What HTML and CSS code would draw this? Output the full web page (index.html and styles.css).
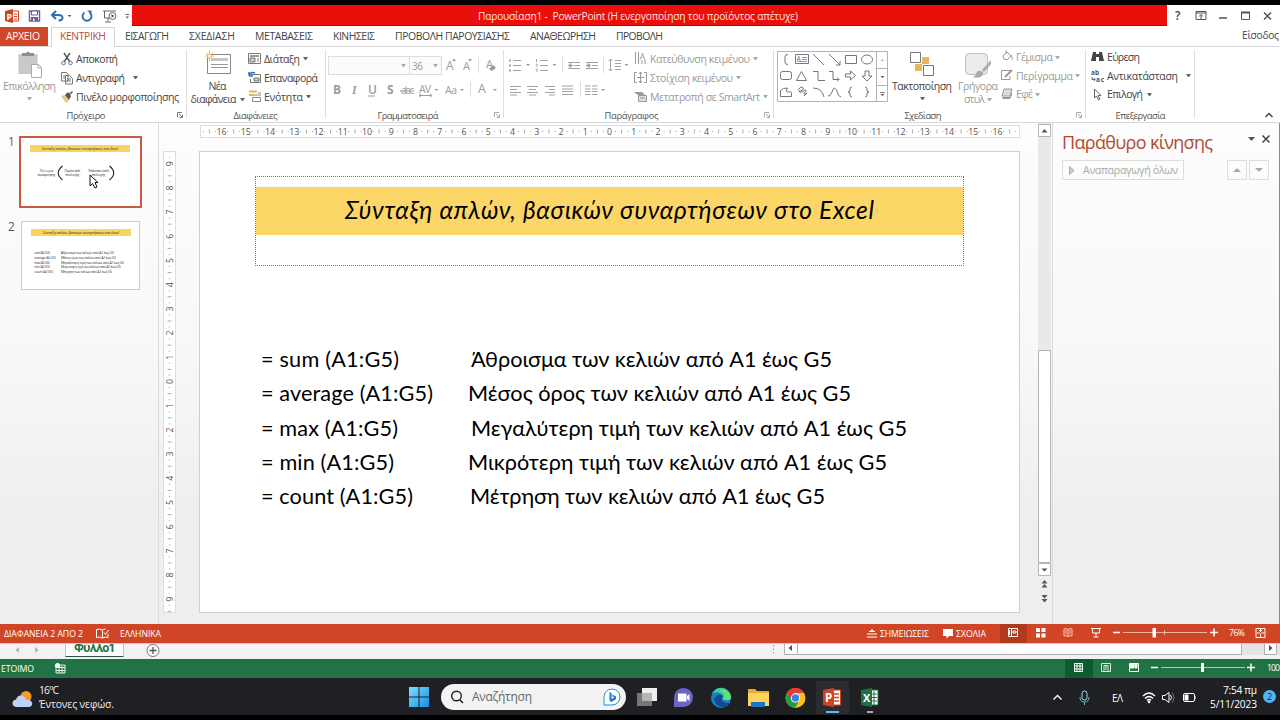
FILE: index.html
```html
<!DOCTYPE html>
<html lang="el">
<head>
<meta charset="utf-8">
<title>Παρουσίαση1 - PowerPoint</title>
<link rel="stylesheet" href="styles.css">
</head>
<body>
<div class="screen">
  <header class="titlebar">
    <svg class="quick" width="132" height="22" viewBox="0 5 132 22">
      <path d="M5 11l8-2v14l-8-2z" fill="#d04423"/><path d="M13 11h5.500v10h-5.500" fill="#fff" stroke="#d04423"/><path d="M14 14h3M14 16.500h3M14 19h3" stroke="#d04423"/><text x="6.500" y="19.500" font-size="9" font-weight="700" fill="#fff">P</text>
      <path d="M29.500 11h10v10h-10z" fill="#fff" stroke="#74559b" stroke-width="1.400"/><path d="M31.500 11h6v4h-6z" fill="#fff" stroke="#74559b"/><path d="M31 17h7v4h-7z" fill="#74559b"/><path d="M33 18.500h1.500V21H33z" fill="#fff"/>
      <path d="M52 15h6.500c3 0 4 1.200 4 2.800s-1.500 2.700-4 2.700M56 11l-4 4 4 4" fill="none" stroke="#2f6fb3" stroke-width="2"/><path d="M67.500 15h4l-2 2z" fill="#555"/>
      <path d="M84.500 12.500a4.500 4.500 0 1 0 5 0" fill="none" stroke="#2f6fb3" stroke-width="1.900"/><path d="M87 10.500h4.500v4z" fill="#2f6fb3"/>
      <path d="M103 11h13M104.500 11v7h6M108 18v3M105 22h6" fill="none" stroke="#666"/><circle cx="112.500" cy="16" r="3.500" fill="#fff" stroke="#666"/><path d="M111.500 14l3 2-3 2z" fill="#666"/>
      <path d="M125.500 14.500h3.500" stroke="#666"/><path d="M125.500 16.500h3.500l-1.750 2z" fill="#666"/>
    </svg>
    <div class="red"><span data-w="320">Παρουσίαση1 -&nbsp; PowerPoint (Η ενεργοποίηση του προϊόντος απέτυχε)</span></div>
    <svg class="winbtns" width="112" height="22" viewBox="1167 5 112 22" fill="none" stroke="#555">
      <text x="1175" y="20" font-size="12" font-weight="600" fill="#444" stroke="none">?</text>
      <path d="M1196 11.500h10v8h-10zM1196 13h10M1201 19v-4M1199 16.500l2-2 2 2"/><path d="M1219 18h8" stroke-width="1.500"/><path d="M1241.500 12.500h8v7h-8z"/><path d="M1241 12.500h9" stroke-width="2"/><path d="M1262.500 12.500l7 7m0-7l-7 7" stroke-width="1.500" transform="translate(1.500 0)"/>
    </svg>
  </header>

  <nav class="tabs">
    <span class="tab file"><b data-w="34">ΑΡΧΕΙΟ</b></span>
    <span class="tab active"><b data-w="46">ΚΕΝΤΡΙΚΗ</b></span>
    <span class="tab"><b data-w="44">ΕΙΣΑΓΩΓΗ</b></span>
    <span class="tab"><b data-w="46">ΣΧΕΔΙΑΣΗ</b></span>
    <span class="tab"><b data-w="58">ΜΕΤΑΒΑΣΕΙΣ</b></span>
    <span class="tab"><b data-w="42">ΚΙΝΗΣΕΙΣ</b></span>
    <span class="tab"><b data-w="115">ΠΡΟΒΟΛΗ ΠΑΡΟΥΣΙΑΣΗΣ</b></span>
    <span class="tab"><b data-w="66">ΑΝΑΘΕΩΡΗΣΗ</b></span>
    <span class="tab"><b data-w="47">ΠΡΟΒΟΛΗ</b></span>
    <span class="signin"><b data-w="37">Είσοδος</b></span>
  </nav>

  <section class="ribbon">
    <div class="group clipboard">
      <div class="tools">
        <div class="big paste off">
          <svg width="24" height="28" viewBox="20 51 24 28"><path d="M20.500 54h19v20h-19z" fill="#c9c9c9"/><path d="M24 56v-3h4q2-3 4 0h4v3z" fill="#8e8e8e"/><path d="M33.500 64.500h7l3 3v10h-10z" fill="#fff" stroke="#aaa"/><path d="M40 65v3h3" fill="none" stroke="#aaa"/></svg>
          <span data-w="53">Επικόλληση</span><i class="dd gap"></i>
        </div>
        <div class="list">
          <div class="row"><svg width="12" height="14"><path d="M3 1l6 9M9 1L3 10" stroke="#555" stroke-width="1.400"/><circle cx="2.500" cy="11" r="1.800" fill="none" stroke="#4a7fb5"/><circle cx="9.500" cy="11" r="1.800" fill="none" stroke="#4a7fb5"/></svg><span data-w="42">Αποκοπή</span></div>
          <div class="row"><svg width="12" height="14" fill="#fff" stroke="#777"><path d="M.5 1.500h5l1.500 1.500v7H.5zM4.500 4.500h4l3 3v5.500h-7z"/><path d="M2 5h2M2 7h2M6 8h4M6 10h4" /></svg><span data-w="49">Αντιγραφή</span><i class="dd wide"></i></div>
          <div class="row"><svg width="12" height="14"><path d="M0 6l4-1 4 5-3 3z" fill="#ecc583"/><path d="M4 5l3-3 3 4-2 4z" fill="#555"/><path d="M8 4l3-3 1 1-3 3z" fill="#555"/></svg><span data-w="103">Πινέλο μορφοποίησης</span></div>
        </div>
      </div>
      <div class="caption"><span data-w="39">Πρόχειρο</span><svg class="launch" width="6" height="6"><path d="M.5 5V.5H5M2 2l3 3M5.500 2.500v3h-3" fill="none" stroke="#777"/></svg></div>
    </div>

    <div class="group slides">
      <div class="tools">
        <div class="big">
          <svg width="26" height="25" viewBox="204 51 26 25"><path d="M206.500 54.500h23v19h-23z" fill="#fff" stroke="#888"/><path d="M210 58h17v3h-17z" fill="#c8c8c8"/><path d="M210 64.500h17M210 67.500h17" stroke="#999"/><path d="M208.500 51v10M204 56h9M205 52.500l7 7M212 52.500l-7 7" stroke="#f1b751"/><circle cx="208.500" cy="56" r="2" fill="#fff" stroke="#f1b751"/></svg>
          <span data-w="18">Νέα</span><span class="line2"><span data-w="46">διαφάνεια</span><i class="dd"></i></span>
        </div>
        <div class="list">
          <div class="row"><svg width="14" height="14" fill="none" stroke="#777"><path d="M.5 1.500h12v10H.5z"/><path d="M2 4h9" stroke-width="2" stroke="#999"/><path d="M2 6h5v4H2zM9 7h2M9 9h2" fill="#ccc"/></svg><span data-w="36">Διάταξη</span><i class="dd"></i></div>
          <div class="row"><svg width="14" height="14" fill="none" stroke="#777"><path d="M3 3.500h9.500v8H2.500V8"/><path d="M6 7h5v3H6z" fill="#ccc"/><path d="M1 4V1M1 5h4M1 5q2-5 6-3" stroke="#2f6fb3" stroke-width="1.500"/></svg><span data-w="54">Επαναφορά</span></div>
          <div class="row"><svg width="14" height="14" fill="none"><path d="M1 1.500h8M1 5h5" stroke="#e9b04b" stroke-width="2"/><path d="M4.500 7.500h8v4h-8zM6 5h7M10 3h3" stroke="#888"/></svg><span data-w="39">Ενότητα</span><i class="dd"></i></div>
        </div>
      </div>
      <div class="caption"><span data-w="44">Διαφάνειες</span></div>
    </div>

    <div class="group font">
      <div class="tools stack">
        <div class="strip">
          <div class="combo"><i class="dd"></i></div><div class="combo size"><span data-w="11">36</span><i class="dd"></i></div>
          <svg width="60" height="19" viewBox="443 56 60 19" fill="#9c9c9c"><text x="447" y="70" font-size="12">A</text><text x="464" y="70" font-size="11">A</text><path d="M453 61l2-2.500 2 2.500zM469 59h4l-2 2.500z"/><path d="M479.500 57v16" stroke="#ddd"/><text x="487" y="68" font-size="11">A</text><path d="M490 69l4-4 3 3-4 3z"/></svg>
        </div>
        <svg width="177" height="20" viewBox="326 80 177 20" fill="#9c9c9c" font-size="12"><text x="333" y="94" font-weight="700">B</text><text x="352" y="94" class="serif" font-style="italic" font-weight="700">I</text><text x="368" y="94" font-weight="600">U</text><path d="M368 96h7" stroke="#9c9c9c"/><text x="387" y="94" font-weight="700">S</text><text x="401" y="94" font-size="10" textLength="13">abc</text><path d="M400 91h14" stroke="#9c9c9c"/><text x="419" y="93" font-size="10.500" textLength="12">AV</text><path d="M420 95.500h11M421 94l-2 1.500 2 1.500M430 94l2 1.500-2 1.500" fill="none" stroke="#9c9c9c"/><path d="M434.500 89h4l-2 2zM460 89h4l-2 2zM493 89h4l-2 2z"/><text x="445" y="94" font-size="10.500" textLength="12">Aa</text><path d="M470.500 82v15" stroke="#ddd"/><text x="478" y="93" font-size="12.500">A</text></svg>
      </div>
      <div class="caption"><span data-w="61">Γραμματοσειρά</span><svg class="launch" width="6" height="6"><path d="M.5 5V.5H5M2 2l3 3M5.500 2.500v3h-3" fill="none" stroke="#aaa"/></svg></div>
    </div>

    <div class="group para">
      <div class="tools">
        <svg width="130" height="62" viewBox="504 47 130 62" fill="none" stroke="#a2a2a2"><path d="M513 60.500h8M513 65.500h8M513 70.500h8M540 60.500h8M540 65.500h8M540 70.500h8"/><path d="M509 60.500h2M509 65.500h2M509 70.500h2" stroke-width="2"/><path d="M536.500 59v3M535.500 64h1.500v3M535.500 69h1.500v3"/><path d="M562.500 57v16M603.500 57v16M580.500 82v15" stroke="#ddd"/><path d="M568 62.500h12M574 65.500h6M568 68.500h12M586 62.500h12M592 65.500h6M586 68.500h12"/><path d="M573 65.500h-4m2-2l-2 2 2 2M586 65.500h4m-2-2l2 2-2 2" stroke-width="1.300"/><path d="M615 60.500h6M615 63.500h6M615 66.500h6M615 69.500h6M610.500 59v12M608.500 61l2-2 2 2M608.500 69l2 2 2-2"/><path d="M510 86.500h11M510 89.500h7M510 92.500h11M510 95h7M527 86.500h11M529 89.500h7M527 92.500h11M529 95h7M545 86.500h10M549 89.500h6M545 92.500h10M549 95h6M562 86h11M562 89h11M562 91.500h11M562 94.500h11M585 86h5.500M585 89h5.500M585 91.500h5.500M585 94.500h5.500M592 86h5.500M592 89h5.500M592 91.500h5.500M592 94.500h5.500"/><path d="M526 64h4l-2 2zM552.500 64h4l-2 2zM624.500 64h4l-2 2zM601 89h4l-2 2z" fill="#999" stroke="none"/></svg>
        <div class="list off">
          <div class="row"><svg width="14" height="15" fill="none" stroke="#999"><path d="M1.500 1v12M4.500 1v12M8 13v-4M11 13v-4"/><text x="5.500" y="9" font-size="9" fill="#999" stroke="none">A</text></svg><span data-w="100">Κατεύθυνση κειμένου</span><i class="dd"></i></div>
          <div class="row"><svg width="14" height="14" fill="none" stroke="#999"><path d="M3 1.500H.5v10H3M10 1.500h2.500v10H10M3 6.500h7M6.500 1v11M5 3l1.500-2L8 3M5 10l1.500 2L8 10"/></svg><span data-w="83">Στοίχιση κειμένου</span><i class="dd"></i></div>
          <div class="row"><svg width="14" height="14"><path d="M0 2h8l3 3H4z" fill="#999"/><path d="M4.500 5.500h8v6h-8z" fill="#ddd" stroke="#999"/><path d="M6 8h5" stroke="#999"/></svg><span data-w="110">Μετατροπή σε SmartArt</span><i class="dd"></i></div>
        </div>
      </div>
      <div class="caption"><span data-w="54">Παράγραφος</span><svg class="launch" width="6" height="6"><path d="M.5 5V.5H5M2 2l3 3M5.500 2.500v3h-3" fill="none" stroke="#aaa"/></svg></div>
    </div>

    <div class="group drawing">
      <div class="tools">
        <svg class="gallery" width="112" height="52" viewBox="777 51 112 52" fill="none" stroke="#666" stroke-width=".9"><path d="M777.500 51.500h110v50h-110zM876.500 51.500v50M876.500 68.500h11M876.500 85.500h11" stroke="#aaa"/><path d="M788 54.500q-3 0-3 2v6q0 2 3 2"/><path d="M795.500 54.500h13v9h-13z" stroke="#667"/><path d="M802 57.500h5M802 59.500h5M797 61.500h10" stroke="#6b8fb8"/><text x="796.500" y="61" font-size="6.500" fill="#2f6fb3" stroke="none">A</text><path d="M813 54l11 11M829 54l11 11m0-4v4h-4M845.500 55.500h11v8h-11z"/><ellipse cx="867" cy="59.500" rx="5.500" ry="4.500"/><rect x="780.500" y="71.500" width="11" height="8" rx="2"/><path d="M796.500 80.500l5-9 5 9zM813 71.500h5v9h7M829 71.500h4v8h6m-2-2l2 2-2 2M845.500 74h5v-3l5 4.500-5 4.500v-3h-5zM865 71h4v5h3l-5 5-5-5h3z"/><path d="M780.500 96.500v-6l3-2 4-.5-1 2q-1 3 4 1.500l1 1v4zM798 90q4-5 5-2t-4 3q1 3 6-1 3 0-1 3-1 2 3 0l-3 3M813 88q9 0 11 9M828 96q2 1 4-4 2-7 5-1 1 6 4 6M852 87q-2 0-2 2v2l-2 1 2 1v2q0 2 2 2M865 87q2 0 2 2v2l2 1-2 1v2q0 2-2 2"/><path d="M880.500 61l1.800-2 1.800 2z" stroke="none" fill="#bbb"/><path d="M880.500 76h4l-2 2zM880.500 94h4l-2 2zM880 92h5v.7h-5z" stroke="none" fill="#555"/></svg>
        <div class="big arrange">
          <svg width="25" height="25" viewBox="909 51 25 25"><path d="M921 57h7v7h-7zM914 64h7v7h-7z" fill="#e8b65a"/><path d="M909.500 52.500h10v10h-10zM922.500 65.500h10v10h-10z" fill="#fff" stroke="#777"/></svg>
          <span data-w="60">Τακτοποίηση</span><i class="dd gap"></i>
        </div>
        <div class="big styles off">
          <svg width="27" height="28" viewBox="964 51 27 28"><rect x="964.500" y="53.500" width="22" height="21" rx="4" fill="#eeeaee" stroke="#bbb"/><path d="M990 60l-9 10 2 2 7-8zM980 71q-4-1-5 3-1 3-4 3 7 2 10-1 2-2 1-4z" fill="#aaa"/></svg>
          <span data-w="40">Γρήγορα</span><span class="line2"><span data-w="21">στυλ</span><i class="dd"></i></span>
        </div>
        <div class="list off">
          <div class="row"><svg width="13" height="14" fill="none" stroke="#999"><path d="M2 6l4-4 4 4-4 4-3-1zM5 4V0M10 5q2 2 1 5"/></svg><span data-w="37">Γέμισμα</span><i class="dd"></i></div>
          <div class="row"><svg width="13" height="14" fill="none" stroke="#999"><path d="M9 1.500H.5v9H9V7"/><path d="M4 8l7-7" stroke-width="2"/></svg><span data-w="57">Περίγραμμα</span><i class="dd"></i></div>
          <div class="row"><svg width="13" height="14"><path d="M3 2h8l-2 7H1z" fill="#ddd" stroke="#999"/><path d="M1 10h8l2-6v4l-2 4H2z" fill="#999"/></svg><span data-w="17">Εφέ</span><i class="dd"></i></div>
        </div>
      </div>
      <div class="caption"><span data-w="37">Σχεδίαση</span><svg class="launch" width="6" height="6"><path d="M.5 5V.5H5M2 2l3 3M5.500 2.500v3h-3" fill="none" stroke="#aaa"/></svg></div>
    </div>

    <div class="group editing">
      <div class="tools">
        <div class="list">
          <div class="row"><svg width="13" height="14" fill="#444"><path d="M2 2h3v2h3V2h3l2 9H8V7H5v4H0z"/></svg><span data-w="33">Εύρεση</span></div>
          <div class="row"><svg width="13" height="16"><text x="0" y="7" font-size="6.500" font-weight="700" fill="#555" textLength="8">ab</text><text x="5" y="14" font-size="6.500" font-weight="700" fill="#555" textLength="8">ac</text><path d="M1 9v2.500h3m-1-1.500l1 1.500-1 1.500" fill="none" stroke="#2f6fb3"/></svg><span data-w="71">Αντικατάσταση</span><i class="dd wide"></i></div>
          <div class="row"><svg width="13" height="14"><path d="M3.500 2v9l2-2 2 4 1.500-1-2-3.500h3z" fill="#fff" stroke="#666"/></svg><span data-w="36">Επιλογή</span><i class="dd"></i></div>
        </div>
      </div>
      <div class="caption"><span data-w="50">Επεξεργασία</span></div>
    </div>
    <svg class="collapse" width="8" height="6"><path d="M.5 5l3.500-3.500L7.500 5" fill="none" stroke="#444" stroke-width="1.500"/></svg>
  </section>

  <main class="work">
    <aside class="thumbs">
      <div class="thumb current"><em>1</em><div class="mini">
        <div class="mini-title"><span data-w="76">Σύνταξη απλών, βασικών συναρτήσεων στο Excel</span></div>
        <div class="formula"><p><span data-w="13">Όνομα</span><span data-w="18">συνάρτησης</span></p><svg width="6" height="16"><path d="M5.500 1Q-3 8 5.500 15" fill="none" stroke="#222" stroke-width="1.100"/></svg><p><span data-w="16">Πρώτο κελί</span><span data-w="14">επιλογής</span></p><p class="last"><span data-w="21">Τελευταίο κελί</span><span data-w="14">επιλογής</span></p><svg width="6" height="16"><path d="M.5 1q8.500 7 0 14" fill="none" stroke="#222" stroke-width="1.100"/></svg></div>
      </div></div>
      <svg class="pointer" width="10" height="15"><path d="M1 1v11l2.500-2.500L6 14l2-1-2-4.500h3z" fill="#fff" stroke="#111"/></svg>
      <div class="thumb"><em>2</em><div class="mini">
        <div class="mini-title"><span data-w="76">Σύνταξη απλών, βασικών συναρτήσεων στο Excel</span></div>
        <div class="mini-lines">
          <span data-w="18">= sum (A1:G5)</span><span data-w="53">Άθροισμα των κελιών από A1 έως G5</span>
          <span data-w="24">= average (A1:G5)</span><span data-w="55">Μέσος όρος των κελιών από A1 έως G5</span>
          <span data-w="18">= max (A1:G5)</span><span data-w="63">Μεγαλύτερη τιμή των κελιών από A1 έως G5</span>
          <span data-w="18">= min (A1:G5)</span><span data-w="60">Μικρότερη τιμή των κελιών από A1 έως G5</span>
          <span data-w="21">= count (A1:G5)</span><span data-w="51">Μέτρηση των κελιών από A1 έως G5</span>
        </div>
      </div></div>
    </aside>
    <div class="editor">
      <svg class="hruler" width="820" height="13" viewBox="200 125 820 13"></svg>
      <svg class="vruler" width="13" height="462" viewBox="163 151 13 462"></svg>
      <article class="slide">
        <div class="title-box"><h1><span data-w="529">Σύνταξη απλών, βασικών συναρτήσεων στο Excel</span></h1></div>
        <div class="lines">
          <p><span data-w="138">= sum (A1:G5)</span><span data-w="361">Άθροισμα των κελιών από A1 έως G5</span></p>
          <p class="shift"><span data-w="172">= average (A1:G5)</span><span data-w="383">Μέσος όρος των κελιών από A1 έως G5</span></p>
          <p><span data-w="137">= max (A1:G5)</span><span data-w="436">Μεγαλύτερη τιμή των κελιών από A1 έως G5</span></p>
          <p class="shift"><span data-w="133">= min (A1:G5)</span><span data-w="419">Μικρότερη τιμή των κελιών από A1 έως G5</span></p>
          <p class="half"><span data-w="152">= count (A1:G5)</span><span data-w="355">Μέτρηση των κελιών από A1 έως G5</span></p>
        </div>
      </article>
    </div>
    <svg class="scroll" width="14" height="501" viewBox="1038 123 14 501"><path d="M1038 123h13v452h-13z" fill="#e9e9e9"/><path d="M1038.500 124.500h12v12h-12zM1038.500 350.500h12v212h-12zM1038.500 563.500h12v12h-12z" fill="#fff" stroke="#b5b5b5"/><path d="M1041.500 132.500h6l-3-3.500zM1041.500 568.500h6l-3 3zM1041.500 583.500h6l-3-3.500zM1041.500 587.500h6l-3-3.500zM1041.500 595h6l-3 3.500zM1041.500 599h6l-3 3.500z" fill="#555"/></svg>
    <aside class="pane">
      <div class="pane-head"><h2><span data-w="151">Παράθυρο κίνησης</span></h2><svg width="24" height="12"><path d="M0 4h7l-3.500 4z" fill="#555"/><path d="M14.500 2.500l7 7m0-7l-7 7" stroke="#444" stroke-width="1.500"/></svg></div>
      <div class="pane-tools"><div class="play"><svg width="6" height="9"><path d="M.5.5l4.500 4-4.500 4z" fill="#ccc" stroke="#aaa"/></svg><span data-w="95">Αναπαραγωγή όλων</span></div><div class="sq first"><i class="up"></i></div><div class="sq"><i class="down"></i></div></div>
    </aside>
  </main>

  <footer class="status">
    <span data-w="79">ΔΙΑΦΑΝΕΙΑ 2 ΑΠΟ 2</span>
    <svg class="proof" width="13" height="11" fill="none" stroke="#fff"><path d="M6.500 2Q4 .5.500 1.500v8q3-1 6 .5V2q1-1 3-.8M6.500 10q3-1.500 5.500-.5V6M8 4.500l1.500 2 3-4.500"/></svg>
    <span data-w="41">ΕΛΛΗΝΙΚΑ</span>
    <svg class="notes" width="10" height="9"><path d="M0 5h10M0 8h10M2 2.500h6" stroke="#fff"/><path d="M3 2l2-2 2 2z" fill="#fff"/></svg>
    <span data-w="49">ΣΗΜΕΙΩΣΕΙΣ</span>
    <svg class="comments" width="10" height="10"><path d="M0 0h10v7H6L3.500 9.500V7H0z" fill="#fff"/></svg>
    <span data-w="30">ΣΧΟΛΙΑ</span>
    <svg class="views" width="280" height="19" viewBox="1000 624 280 19" fill="none" stroke="#fff"><path d="M1000 624h27v19h-27z" fill="#b23a1c" stroke="none"/><path d="M1008.500 628.500h9v8h-9zM1011.500 628v9M1013 631h3v2h-3z"/><path d="M1009.500 630v5"/><path d="M1036 628h4v4h-4zM1041.500 628h4v4h-4zM1036 633.500h4v4h-4zM1041.500 633.500h4v4h-4z" fill="#fff" stroke="none"/><path d="M1068 629.500q-2-1.500-4-.5v7q2-1 4 .5 2-1.500 4-.5v-7q-2-1-4 .5v7M1065 631h2M1065 633h2M1069 631h2M1069 633h2" stroke="#f5cabd"/><path d="M1091 628.500h10M1092.500 628.500v4.500h7v-4.500M1096 633v3.500M1093.500 637h5"/><path d="M1113 632.500h7M1210 632.500h8M1214 628.500v8" stroke-width="1.500"/><path d="M1123 632.500h84M1164.500 630v5" stroke="#f1b4a3"/><path d="M1152.500 628h3.500v9.500h-3.500z" fill="#fff" stroke="none"/><text x="1229" y="636" font-size="8.700" fill="#fff" stroke="none" textLength="16">76%</text><path d="M1256 628.500h9v9h-9zM1260.500 629v3m-1.500-1.500h3M1260.500 637v-3M1257 633h3M1264 633h-3"/></svg>
  </footer>

  <div class="sheetbar">
    <svg class="nav" width="30" height="9"><path d="M4 1v6L.5 4zM20 1v6l3.500-3z" fill="#b5b5b5"/></svg>
    <div class="sheet"><span data-w="41">Φύλλο1</span></div>
    <svg class="add" width="14" height="14"><circle cx="7" cy="6.500" r="6" fill="#fff" stroke="#777"/><path d="M3.500 6.500h7M7 3v7" stroke="#555" stroke-width="1.300"/></svg>
    <svg class="hscroll" width="510" height="14" viewBox="770 644 510 14"><path d="M773.500 646v8" stroke="#999" stroke-dasharray="1.500 2"/><path d="M785 644h495v12H785z" fill="#e4e4e4"/><path d="M784.500 643v12.500h457V643M797.500 643v12M1264.500 643.500h12v12h-12z" fill="#fff" stroke="#b0b0b0"/><path d="M792 646v6l-3.500-3zM1269 646v6l3.500-3z" fill="#555"/></svg>
  </div>

  <div class="excel">
    <span data-w="33">ΕΤΟΙΜΟ</span>
    <svg class="macro" width="11" height="11"><path d="M1 2h9v8H1z" fill="none" stroke="#e7f3eb"/><path d="M1 4.500h9M1 7.500h9M4 3v7M7 3v7" stroke="#e7f3eb"/><circle cx="2.500" cy="2.500" r="2.500" fill="#fff"/></svg>
    <svg class="xviews" width="215" height="19" viewBox="1065 659 215 19" fill="none" stroke="#fff"><path d="M1065 659h28v19h-28z" fill="#0d5c2e" stroke="none"/><path d="M1074.500 663.500h8v8h-8zM1077 663v9M1080 663v9M1074 666h9M1074 669h9"/><path d="M1101.500 663.500h9v8h-9zM1104 665.500h4v6h-4zM1105 667h2M1105 669h2" stroke="#d7eadd"/><path d="M1129.500 663.500h9v8h-9z"/><path d="M1130 664h4v4h-4zM1135 664h2v4h-2z" fill="#fff"/><path d="M1151 667.500h7M1247 667.500h8M1251 663.500v8" stroke-width="1.500"/><path d="M1161 667.500h84" stroke="#a7cbb4"/><path d="M1201 663h3v9h-3z" fill="#fff" stroke="none"/><text x="1267" y="671" font-size="8.700" fill="#fff" stroke="none" textLength="13">100</text></svg>
  </div>

  <div class="taskbar">
    <svg class="weather" width="21" height="18"><circle cx="14" cy="6.500" r="5.500" fill="#f59a23"/><path d="M4 17Q0 16 .5 12.500 1 10 4 9.500 6 4 11 6q2.500 1 3 4 3-1 5 1t1 4q-1 2-3 2z" fill="#bdd3f8"/></svg>
    <div class="forecast"><span data-w="20">16°C</span><span data-w="75">Έντονες νεφώσ.</span></div>
    <svg class="start" width="20" height="20"><defs><linearGradient id="win" x2="1" y2="1"><stop stop-color="#7fdcff"/><stop offset="1" stop-color="#1690e8"/></linearGradient></defs><path d="M0 0h9.500v9.500H0zM10.500 0H20v9.500h-9.500zM0 10.500h9.500V20H0zM10.500 10.500H20V20h-9.500z" fill="url(#win)"/></svg>
    <div class="search"><svg width="13" height="14"><circle cx="5.500" cy="6" r="4.800" fill="none" stroke="#222" stroke-width="1.400"/><path d="M9 10l3 3" stroke="#222" stroke-width="1.600"/></svg><span data-w="60">Αναζήτηση</span>
      <svg class="bing" width="18" height="18"><path d="M1 17V9a8 8 0 1 1 8 8z" fill="#fff" stroke="#1d8fd8"/><path d="M6.500 4l2 1v6l3-1.500-2-1-.5-2 4 2v2.500L8.500 14l-2-1.500z" fill="#1c74d4"/></svg></div>
    <svg class="apps" width="246" height="37" viewBox="634 678 246 37">
      <path d="M637 693h15v13h-15z" fill="#777"/><path d="M642 688h15v13h-15z" fill="#eee"/><path d="M642 693h10v8h-10z" fill="#b5b5b5"/>
      <path d="M674 707v-9a9.500 9.500 0 1 1 9.500 9z" fill="#6d63c7"/><path d="M678 693.500h8.500v8H678zM687 696l2.500-2v7l-2.500-2z" fill="#fff"/>
      <circle cx="721" cy="698" r="10" fill="#1781c8"/><path d="M712 693q6-8 14-4 6 4 5 9-1 3-7 2-3-1-1-4-3-5-11-3z" fill="#39c7a5"/><path d="M714 699q5-7 9-3-3 5 1 6 4 2 6 1-5 6-11 3-4-2-5-7z" fill="#104b91"/><path d="M724 689q7 4 7 9-1 3-5 2-2 0-2-2 2-5-5-8z" fill="#63df75"/>
      <path d="M748 689h7l2 2h12v15h-21z" fill="#e8ac2c"/><path d="M748 693h21v13h-21z" fill="#ffd35c"/><path d="M751 702h14v5h-14z" fill="#1778bf"/>
      <circle cx="795.500" cy="698" r="10" fill="#fbc116"/><path d="M786.800 693a10 10 0 0 1 17.400 0h-8.700l-4.300 7.500z" fill="#e33b2e"/><path d="M786.800 693a10 10 0 0 0 8.200 15l4.500-8-8 0z" fill="#239b4b"/><circle cx="795.500" cy="698" r="4.700" fill="#fff"/><circle cx="795.500" cy="698" r="3.700" fill="#3a80ea"/>
      <path d="M816 681h33v33h-33z" fill="#2b2c31"/><path d="M831 690h9.500v15h-9.500z" fill="#fff" stroke="#d04423"/><path d="M834 694h5M834 697.500h5M834 701h5" stroke="#d04423" stroke-width="1.500"/><path d="M823 690l11-2v19l-11-2z" fill="#d04423"/><text x="825" y="702" font-size="11.500" font-weight="700" fill="#fff">P</text><path d="M826 712h13" stroke="#62b9f0" stroke-width="2"/>
      <path d="M870 690h8v15h-8z" fill="#fff" stroke="#1f7244"/><path d="M871 694h6M871 697.500h6M871 701h6M874 691v14" stroke="#1f7244"/><path d="M861 690l11-2v19l-11-2z" fill="#1f7244"/><text x="863" y="702" font-size="11" font-weight="700" fill="#fff">X</text><path d="M867 712h6" stroke="#aaa" stroke-width="2"/>
    </svg>
    <svg class="tray" width="152" height="37" viewBox="1050 678 152 37" fill="none" stroke="#fff"><path d="M1053.500 699.500l4-4 4 4" stroke-width="1.300"/><rect x="1082" y="691" width="5" height="9" rx="2.500" stroke="#9ce0ef"/><path d="M1080 697q0 5 4.500 5t4.500-5M1084.500 702v3" stroke="#6bb7cc"/><text x="1112" y="701.500" font-size="10" fill="#fff" stroke="none" textLength="11">ΕΛ</text><path d="M1143 696q6-6 12 0M1145 698.500q4-4 8 0M1147 700.500q2-2 4 0" stroke-width="1.400"/><circle cx="1149" cy="702" r="1.300" fill="#fff" stroke="none"/><path d="M1162.500 695.500h2.500l4-3v10l-4-3h-2.500zM1170.500 695q2 2.500 0 5"/><path d="M1172 692.500q4 5 0 10" stroke="#777"/><rect x="1183.500" y="693.500" width="11" height="8" rx="1.500"/><path d="M1185 695h3v5h-3zM1195 696v3" fill="#fff"/></svg>
    <div class="clock"><span data-w="34">7:54 πμ</span><span data-w="47">5/11/2023</span></div>
    <div class="badge">2</div>
  </div>
</div>
<script src="layout.js"></script>
</body>
</html>
```

FILE: layout.js
```js
for (const el of document.querySelectorAll('[data-w]')) {
  const target = Number(el.dataset.w);
  const range = document.createRange();
  range.selectNodeContents(el);
  const natural = range.getBoundingClientRect().width;
  const n = [...el.textContent].length;
  if (n > 1) el.style.letterSpacing = ((target - natural) / (n - 1)).toFixed(3) + 'px';
  el.style.width = target + 'px';
}

// Ruler numerals and tick marks.
const NS = 'http://www.w3.org/2000/svg';
function add(parent, tag, attrs, text) {
  const node = document.createElementNS(NS, tag);
  for (const k in attrs) node.setAttribute(k, attrs[k]);
  if (text !== undefined) node.textContent = text;
  parent.appendChild(node);
}
function ruler(svg, vertical, zero, step, max) {
  for (let q = -max * 4 - 3; q <= max * 4 + 3; q++) {
    const p = zero + q * step / 4;
    if (q % 4 === 0) {
      const n = Math.abs(q / 4);
      add(svg, 'text', vertical
        ? { 'text-anchor': 'middle', transform: `translate(172.5 ${p}) rotate(-90)` }
        : { 'text-anchor': 'middle', x: p, y: 135 }, n);
    } else {
      const h = q % 2 === 0 ? 4 : 1.2;
      add(svg, 'path', { d: vertical ? `M${169.500 - h / 2} ${p}h${h}` : `M${p} ${131.500 - h / 2}v${h}`, stroke: '#aaa' });
    }
  }
}
ruler(document.querySelector('.hruler'), false, 609.5, 24.25, 16);
ruler(document.querySelector('.vruler'), true, 381.5, 24.2, 9);
```

FILE: styles.css
```css
* { box-sizing: border-box; }
body { margin: 0; background: #000; font-family: "Open Sans", "Noto Sans", sans-serif; color: #444; }
svg { display: block; flex: none; overflow: hidden; }
svg text { font-family: "Open Sans", "Noto Sans", sans-serif; }
svg .serif { font-family: "Liberation Serif", serif; }
h1, h2, p { margin: 0; font-weight: 400; }
b { font-weight: 400; }
em { font-style: normal; }
[data-w] { display: inline-block; white-space: nowrap; flex: none; }

.screen { width: 1280px; height: 720px; padding: 5px 0; overflow: hidden; display: flex; flex-direction: column; }

.titlebar { height: 22px; display: flex; background: #fff; padding-right: 1px; }
.red { width: 1035px; height: 21px; background: #eb0f0c; border-bottom: 1px solid #b00; color: #ffe3df; font-size: 10.2px; line-height: 22px; padding-left: 346px; }

.tabs { height: 20px; background: #fff; display: flex; border-bottom: 1px solid #d8d8d8; font-size: 10.4px; line-height: 19px; }
.tab { padding-right: 20px; }
.file { width: 48px; height: 19px; background: #d04727; color: #fff; padding: 0 0 0 6px; margin-right: 3px; }
.active { width: 64px; height: 20px; padding: 0 0 0 8px; margin-right: 10px; background: #fff; border: 1px solid #d4d4d4; border-bottom: 0; color: #c44d31; line-height: 17px; }
.signin { margin-left: auto; padding-right: 1px; font-size: 10.2px; line-height: 17px; }

.ribbon { height: 76px; background: #fff; display: flex; border-bottom: 1px solid #d8d8d8; position: relative; }
.group { height: 75px; position: relative; display: flex; flex-direction: column; font-size: 10.5px; line-height: 14px; }
.group::after { content: ""; position: absolute; right: 0; top: 3px; bottom: 4px; width: 1px; background: #dedede; }
.tools { height: 62px; display: flex; flex: none; }
.stack { flex-direction: column; }
.caption { height: 13px; display: flex; justify-content: center; font-size: 9.4px; line-height: 13px; color: #555; }
.launch { position: absolute; right: 4px; bottom: 4px; }
.clipboard { width: 187px; } .slides { width: 139px; } .font { width: 178px; }
.para { width: 270px; } .drawing { width: 312px; } .editing { width: 109px; }
.clipboard .caption { padding-right: 15px; }
.slides .caption { padding-right: 2px; }
.font .caption { padding-right: 14px; }
.para .caption { padding-right: 15px; }
.drawing .caption { padding-right: 14px; }
.list { padding-top: 2px; }
.row { height: 19px; display: flex; align-items: center; gap: 2px; }
.clipboard .list { padding-left: 2px; }
.clipboard .row { gap: 3px; }
.off { color: #9b9b9b; }
.dd { width: 5px; height: 3px; flex: none; border: solid transparent; border-width: 3px 2.5px 0; border-top-color: #666; margin-left: 1px; }
.off .dd, .combo .dd { border-top-color: #aaa; }
.wide { margin-left: 5px; }
.big { display: flex; flex-direction: column; align-items: center; padding-top: 4px; line-height: 13px; }
.big > svg { margin-bottom: 1px; height: 28px; }
.big .gap { margin: 4px 0 0; }
.line2 { display: flex; align-items: center; gap: 2px; }
.paste { width: 59px; }
.slides .big { width: 61px; }
.slides .big > svg { height: 25px; margin-bottom: 4px; }
.strip { height: 33px; padding: 9px 0 0 2px; display: flex; }
.combo { width: 82px; height: 19px; border: 1px solid #ddd; background: #fbfbfb; display: flex; align-items: center; justify-content: flex-end; padding-right: 3px; }
.size { width: 33px; margin-left: -1px; justify-content: space-between; padding-left: 2px; color: #999; font-size: 10px; }
.gallery { margin: 4px 0 0 3px; }
.arrange { width: 66px; }
.arrange > svg { height: 25px; margin-bottom: 4px; }
.styles { width: 46px; margin: 0; }
.drawing .list, .editing .list { padding-top: 1px; }
.drawing .row { height: 18.500px; gap: 2px; }
.drawing .dd { margin-left: 0; }
.editing .row { height: 18.500px; gap: 3px; }
.editing .list { padding-left: 5px; }
.collapse { position: absolute; left: 1265px; top: 65px; }

.work { height: 501px; display: flex; background: linear-gradient(#fdfdfd, #f8f8f8 45%, #eee 80%); border-right: 1px solid #c9735c; }
.thumbs { width: 159px; border-right: 1px solid #dadada; padding-top: 13px; position: relative; }
.thumb { display: flex; height: 85px; padding-left: 8px; }
.thumb em { width: 13px; font-size: 12px; line-height: 12px; color: #555; }
.mini { width: 119px; height: 69px; background: #fff; border: 1px solid #ccc; font-size: 3.4px; line-height: 4.5px; color: #222; }
.current .mini { width: 123px; height: 72px; margin-left: -2px; border: 2px solid #c95a43; }
.thumb.current em { color: #b5492c; }
.mini-title { width: 100px; height: 7px; margin: 7px 0 0 9px; background: #fad45f; font-style: italic; text-align: center; line-height: 7px; font-size: 3.5px; color: #222; }
.mini-title span { vertical-align: top; }
.formula { display: flex; align-items: center; margin: 13px 0 0 16px; }
.formula p { display: flex; flex-direction: column; align-items: center; width: 19px; }
.formula svg { margin-left: 1px; }
.formula .last { width: 21px; margin-left: 6px; }
.formula .last + svg { margin-left: 0; }
.pointer { position: absolute; left: 89px; top: 51px; }
.mini-lines { display: grid; grid-template-columns: 29px 70px; row-gap: .3px; margin: 15px 0 0 10px; color: #333; }

.editor { width: 879px; display: grid; grid-template-columns: 13px 821px; grid-template-rows: 13px 462px; gap: 13px 23px; padding: 2px 0 0 4px; }
.hruler, .vruler { background: #fff; outline: 1px solid #dedede; outline-offset: -1px; font-size: 8.800px; fill: #555; }
.hruler { grid-column: 2; justify-self: end; }
.slide { width: 821px; height: 462px; background: #fff; border: 1px solid #cfcfcf; padding: 24px 0 0 55px; color: #111; }
.title-box { width: 709px; height: 90px; border: 1px dotted #777; padding-top: 10px; }
.title-box h1 { height: 48px; background: #fcd667; text-align: center; font: italic 24.500px/46px Lato, "Noto Sans", sans-serif; color: #000; }
.lines { margin-top: 76px; padding-left: 6px; font: 21.700px/34.250px Lato, "Noto Sans", sans-serif; color: #000; }
.lines p { display: grid; grid-template-columns: 210px 450px; height: 34.250px; }
.lines .shift { grid-template-columns: 207px 450px; }
.lines .half { grid-template-columns: 209px 450px; }

.pane { width: 227px; border-left: 1px solid #dadada; padding: 7px 10px 0 9px; }
.pane-head { display: flex; justify-content: space-between; height: 30px; color: #b04a30; }
.pane-head svg { margin: 3px -3px 0 0; }
.pane h2 { font-size: 18px; line-height: 24px; }
.pane-tools { display: flex; color: #aaa; font-size: 10.7px; }
.play { width: 122px; height: 20px; border: 1px solid #ddd; display: flex; align-items: center; padding-left: 6px; gap: 8px; }
.sq { width: 20px; height: 20px; border: 1px solid #ddd; display: grid; place-items: center; margin-left: 2px; }
.first { margin-left: 43px; }
.up, .down { border: solid transparent; border-width: 0 4px 4px; border-bottom-color: #aaa; }
.down { border-width: 4px 4px 0; border-top-color: #aaa; }

.status { height: 19px; background: #d04525; color: #fff; display: flex; align-items: center; font-size: 8.7px; line-height: 18px; padding-left: 4px; }
.proof { margin: 0 11px 0 13px; }
.notes { margin: 0 3px 0 706px; }
.comments { margin: 0 3px 0 14px; }
.views { margin-left: 14px; }

.sheetbar { height: 16px; background: #f1f3f2; display: flex; border-top: 1px solid #ccc; overflow: hidden; }
.nav { margin: 2px 20px 0 15px; }
.sheet { width: 59px; height: 13px; background: #fff; border: solid #c5c5c5; border-width: 0 1px; border-bottom: 1.500px solid #30504a; display: flex; justify-content: center; color: #1d6f42; font-weight: 700; font-size: 11.500px; line-height: 7px; }
.add { margin: 0 0 0 22px; }
.hscroll { margin: -1px 0 0 610px; }

.excel { height: 19px; background: #217346; color: #fff; display: flex; align-items: center; font-size: 8.7px; padding-left: 1px; }
.macro { margin-left: 21px; }
.xviews { margin-left: auto; }

.taskbar { height: 37px; background: #1e2024; color: #fff; display: flex; align-items: center; }
.weather { margin: 4px 6px 0 12px; }
.forecast { width: 370px; display: flex; flex-direction: column; font-size: 10.300px; line-height: 14px; color: #eee; padding-bottom: 0; }
.search { width: 185px; height: 26px; border-radius: 13px; background: #f3f3f3; margin: 0 8px 0 12px; display: flex; align-items: center; gap: 8px; padding: 0 5px 0 10px; color: #666; font-size: 12px; }
.bing { margin-left: auto; }
.tray { margin-left: 170px; }
.clock { width: 55px; display: flex; flex-direction: column; align-items: flex-end; font-size: 10.200px; line-height: 14px; }
.badge { width: 13px; height: 13px; border-radius: 7px; background: #4cb6f5; color: #123; font-size: 9px; line-height: 13px; text-align: center; margin-left: 6px; }
```
